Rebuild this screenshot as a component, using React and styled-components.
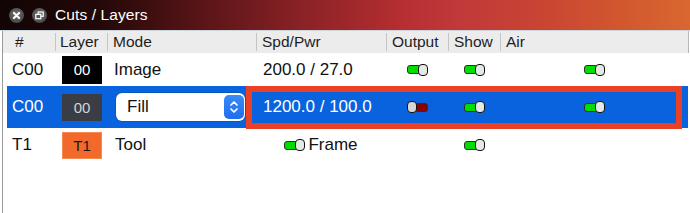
import React from 'react';
import styled, { createGlobalStyle } from 'styled-components';

const GlobalStyle = createGlobalStyle`
  html, body {
    margin: 0;
    padding: 0;
    background: #ffffff;
  }
  body {
    font-family: "Liberation Sans", Arial, Helvetica, sans-serif;
    overflow: hidden;
  }
`;

const COLS = '52px 149px 130px 62px 52px 188px';

const Window = styled.div`
  width: 690px;
  height: 213px;
  display: flex;
  flex-direction: column;
  background: #ffffff;
  overflow: hidden;
`;

const TitleBar = styled.div`
  flex: none;
  height: 30px;
  display: flex;
  align-items: center;
  padding-left: 9px;
  background: linear-gradient(
    90deg,
    #120505 0%,
    #220808 14%,
    #5c1518 30%,
    #8a2226 44%,
    #b52e31 58%,
    #c1383a 66%,
    #c84433 78%,
    #d2572f 90%,
    #d9672f 100%
  );
  border-bottom: 1px solid #cdd6da;
`;

const TitleButton = styled.span`
  width: 15px;
  height: 15px;
  margin-right: ${p => p.$gap}px;
  display: inline-flex;
  svg { display: block; }
`;

const Title = styled.span`
  color: #ffffff;
  font-size: 15.5px;
  letter-spacing: 0.1px;
`;

const Body = styled.div`
  flex: 1;
  margin-left: 2px;
  border-left: 1px solid #9a9a9a;
  display: flex;
  flex-direction: column;
`;

const Header = styled.div`
  display: grid;
  grid-template-columns: 52px ${COLS};
  width: 685px;
  height: 22px;
  background: #ececec;
  border-right: 1px solid #b8b8b8;
  color: #1e1e1e;
  font-size: 15.5px;
`;

const HeadCell = styled.div`
  position: relative;
  display: flex;
  align-items: center;
  padding-left: ${p => p.$pad ?? 6}px;

  ${p => p.$sep && `
    &::before {
      content: '';
      position: absolute;
      left: 0;
      top: 2px;
      bottom: 2px;
      width: 1px;
      background: #c4c4c4;
    }
  `}
`;

const Row = styled.div`
  position: relative;
  display: grid;
  grid-template-columns: 48px ${COLS};
  margin-left: 4px;
  width: 681px;
  height: ${p => p.$h}px;
  background: ${p => (p.$selected ? '#0a63de' : 'transparent')};
  color: ${p => (p.$selected ? '#ffffff' : '#111111')};
  font-size: 17px;
`;

const Cell = styled.div`
  display: flex;
  align-items: center;
  justify-content: ${p => (p.$center ? 'center' : 'flex-start')};
  padding-left: ${p => p.$pad ?? 0}px;
  gap: ${p => p.$gap ?? 0}px;
`;

const Swatch = styled.div`
  width: 40px;
  height: ${p => p.$h}px;
  margin-left: 7px;
  box-sizing: border-box;
  display: flex;
  align-items: center;
  justify-content: center;
  font-size: 15px;
  background: ${p => p.$bg};
  color: ${p => p.$fg};
  border: 1px solid ${p => p.$border || p.$bg};
`;

const Select = styled.div`
  width: 129px;
  height: 28px;
  margin-left: 1px;
  box-sizing: border-box;
  display: flex;
  align-items: center;
  justify-content: space-between;
  padding: 0 1px 0 11px;
  background: #ffffff;
  border-radius: 6px;
  color: #111111;
  font-size: 17px;
  box-shadow: 0 0 0 0.5px rgba(0, 0, 0, 0.25);
`;

const Stepper = styled.span`
  width: 20px;
  height: 24px;
  border-radius: 5px;
  background: linear-gradient(#3b8bf8, #1f6cef);
  display: flex;
  align-items: center;
  justify-content: center;
  svg { display: block; }
`;

const Highlight = styled.div`
  position: absolute;
  left: 239px;
  top: 0;
  width: 436px;
  height: 43px;
  box-sizing: border-box;
  border: 6px solid #ea4026;
  pointer-events: none;
`;

const ToggleWrap = styled.span`
  display: inline-flex;
  align-items: center;
  flex-direction: ${p => (p.$on ? 'row' : 'row-reverse')};
  width: 21px;
  height: 12px;
  flex: none;
`;

const Track = styled.span`
  width: 14px;
  height: 9px;
  box-sizing: border-box;
  border: 1px solid #2e2e2e;
  border-radius: 3px;
  background: ${p => (p.$on ? '#00dd00' : '#8c0000')};
  margin: ${p => (p.$on ? '0 -3px 0 0' : '0 0 0 -3px')};
`;

const Knob = styled.span`
  position: relative;
  z-index: 1;
  width: 10px;
  height: 12px;
  box-sizing: border-box;
  border: 1.4px solid #111111;
  border-radius: 4px;
  background: ${p => (p.$on ? '#e4ebe4' : '#d6d6d6')};
`;

const Toggle = ({ on = true }) => (
  <ToggleWrap $on={on}>
    <Track $on={on} />
    <Knob $on={on} />
  </ToggleWrap>
);

const CloseIcon = () => (
  <svg width="15" height="15" viewBox="0 0 15 15">
    <defs>
      <radialGradient id="tb" cx="50%" cy="40%" r="60%">
        <stop offset="0%" stopColor="#707070" />
        <stop offset="100%" stopColor="#474747" />
      </radialGradient>
    </defs>
    <circle cx="7.5" cy="7.5" r="7.5" fill="url(#tb)" />
    <path d="M4.9 4.9 L10.1 10.1 M10.1 4.9 L4.9 10.1" stroke="#ffffff" strokeWidth="2.1" strokeLinecap="round" />
  </svg>
);

const RestoreIcon = () => (
  <svg width="15" height="15" viewBox="0 0 15 15">
    <circle cx="7.5" cy="7.5" r="7.5" fill="url(#tb)" />
    <rect x="6.2" y="4" width="5" height="4.3" fill="none" stroke="#ffffff" strokeWidth="1.2" />
    <rect x="3.8" y="6.4" width="5" height="4.3" fill="#575757" stroke="#ffffff" strokeWidth="1.2" />
  </svg>
);

const Chevrons = () => (
  <svg width="10" height="16" viewBox="0 0 10 16">
    <path d="M2 6 L5 3 L8 6 M2 10 L5 13 L8 10" fill="none" stroke="#ffffff" strokeWidth="1.7" strokeLinecap="round" strokeLinejoin="round" />
  </svg>
);

export default function App() {
  return (
    <>
      <GlobalStyle />
      <Window>
        <TitleBar>
          <TitleButton $gap={8}><CloseIcon /></TitleButton>
          <TitleButton $gap={8}><RestoreIcon /></TitleButton>
          <Title>Cuts / Layers</Title>
        </TitleBar>

        <Body>
          <Header>
            <HeadCell $pad={12}>#</HeadCell>
            <HeadCell $sep $pad={5}>Layer</HeadCell>
            <HeadCell $sep>Mode</HeadCell>
            <HeadCell $sep>Spd/Pwr</HeadCell>
            <HeadCell $sep>Output</HeadCell>
            <HeadCell $sep>Show</HeadCell>
            <HeadCell $sep>Air</HeadCell>
          </Header>

          <Row $h={33}>
            <Cell $pad={5}>C00</Cell>
            <Cell><Swatch $h={28} $bg="#000000" $fg="#ffffff">00</Swatch></Cell>
            <Cell $pad={7}>Image</Cell>
            <Cell $pad={7}>200.0 / 27.0</Cell>
            <Cell $center><Toggle /></Cell>
            <Cell $center><Toggle /></Cell>
            <Cell $center><Toggle /></Cell>
          </Row>

          <Row $h={42} $selected>
            <Cell $pad={5}>C00</Cell>
            <Cell><Swatch $h={27} $bg="#3a3e44" $fg="#d4d4d4">00</Swatch></Cell>
            <Cell $pad={8}>
              <Select>
                Fill
                <Stepper><Chevrons /></Stepper>
              </Select>
            </Cell>
            <Cell $pad={7}>1200.0 / 100.0</Cell>
            <Cell $center><Toggle on={false} /></Cell>
            <Cell $center><Toggle /></Cell>
            <Cell $center><Toggle /></Cell>
            <Highlight />
          </Row>

          <Row $h={34}>
            <Cell $pad={5}>T1</Cell>
            <Cell><Swatch $h={27} $bg="#f26a2b" $fg="#1a1a1a" $border="#f58a52">T1</Swatch></Cell>
            <Cell $pad={8}>Tool</Cell>
            <Cell $center $gap={3}><Toggle />Frame</Cell>
            <Cell />
            <Cell $center><Toggle /></Cell>
            <Cell />
          </Row>
        </Body>
      </Window>
    </>
  );
}
